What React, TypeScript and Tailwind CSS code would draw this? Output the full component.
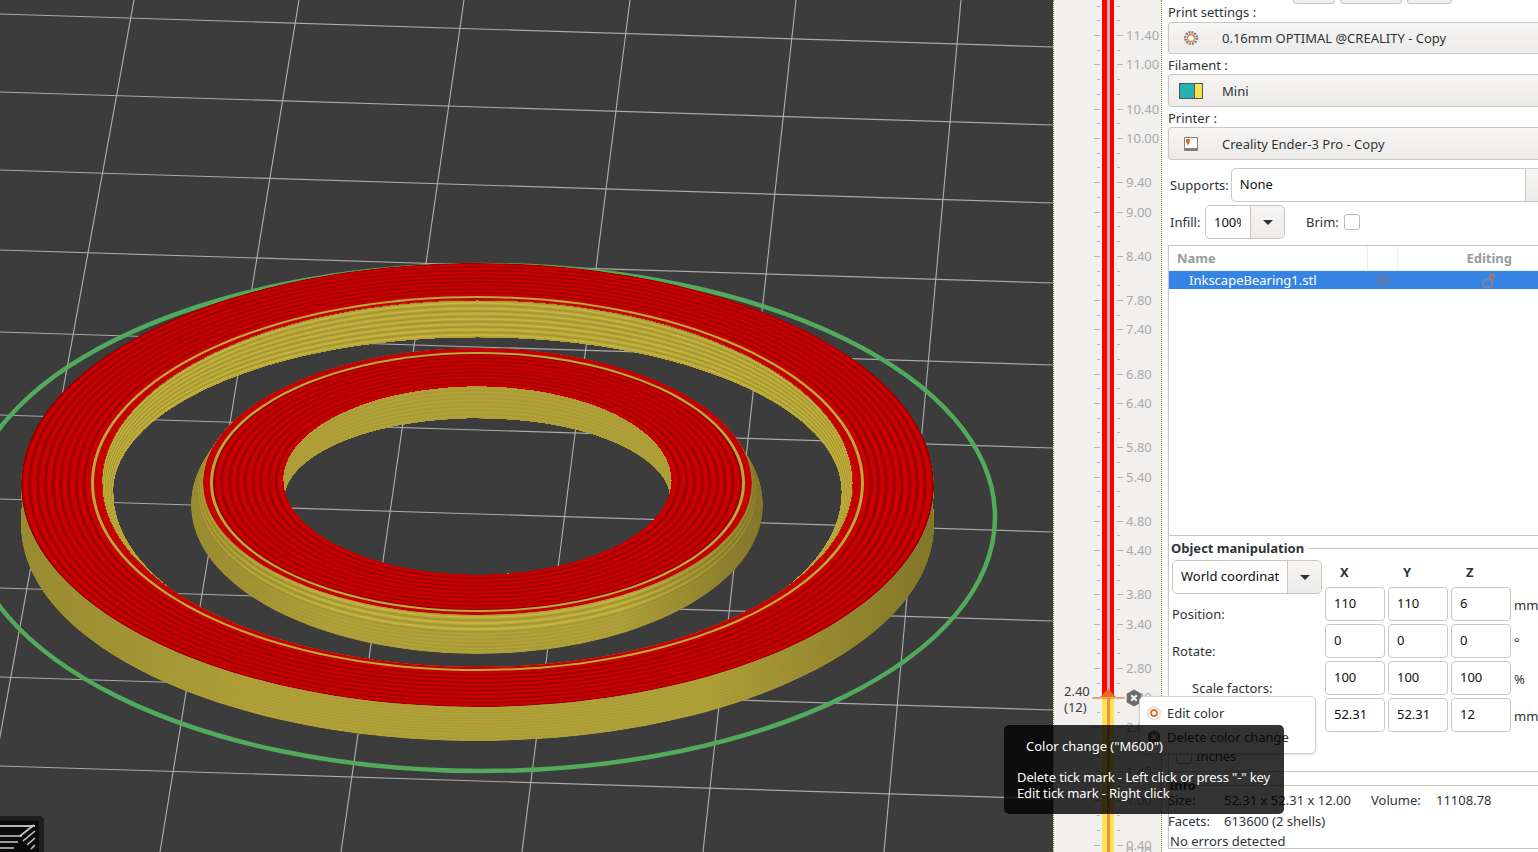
import type { ReactNode } from "react";
import { Eye } from "lucide-react";

// left, right, top, widest y, bottom
type Egg = [number, number, number, number, number];

const eggPath = ([l, r, t, m, b]: Egg) => {
  const k = 0.5523;
  const cx = (l + r) / 2;
  const rx = (r - l) / 2;
  const p = (n: number) => n.toFixed(1);
  return (
    `M${p(l)} ${p(m)}C${p(l)} ${p(m - (m - t) * k)} ${p(cx - rx * k)} ${p(t)} ${p(cx)} ${p(t)}` +
    `C${p(cx + rx * k)} ${p(t)} ${p(r)} ${p(m - (m - t) * k)} ${p(r)} ${p(m)}` +
    `C${p(r)} ${p(m + (b - m) * k)} ${p(cx + rx * k)} ${p(b)} ${p(cx)} ${p(b)}` +
    `C${p(cx - rx * k)} ${p(b)} ${p(l)} ${p(m + (b - m) * k)} ${p(l)} ${p(m)}Z`
  );
};

const lerpEgg = (a: Egg, b: Egg, t: number) => a.map((v, i) => v + (b[i] - v) * t) as Egg;

const REDS = ["#8c0000", "#b40000", "#cc0000", "#cc0000", "#c00000"];

// concentric print lines between two outlines, outer one first
const Stripes = ({ from, to, count, tones }: { from: Egg; to: Egg; count: number; tones: string[] }) => {
  const steps = count * tones.length;
  return (
    <>
      {Array.from({ length: steps }, (_, i) => (
        <path key={i} d={eggPath(lerpEgg(from, to, i / steps))} fill={tones[i % tones.length]} />
      ))}
    </>
  );
};

const outerRim: Egg = [21, 934, 263, 485, 707];
const outerLineA: Egg = [91, 864, 296, 483, 671];
const outerLineB: Egg = [94, 861, 298, 483, 669];
const outerHole: Egg = [102, 853, 300, 483, 667];
const outerWall: Egg = [113, 842, 337, 492, 672];
const outerSide: Egg = [21, 934, 270, 525, 741];

const innerRim: Egg = [203, 752, 348, 483, 615];
const innerLineA: Egg = [210, 745, 352, 483, 612];
const innerLineB: Egg = [213, 742, 354, 483, 610];
const innerHole: Egg = [283, 672, 386, 480, 575];
const innerWall: Egg = [284, 671, 418, 500, 590];
const innerSide: Egg = [191, 763, 355, 505, 654];
const skirt: Egg = [-33, 995, 265, 517, 771];

const YELLOW_SIDE = ["#a99a37", "#b3a33a", "#ad9e38"];
const YELLOW_WALL = ["#a39433", "#b8a83b", "#c9b83e", "#b0a038"];

const VERTICALS = [
  [134, -21],
  [299, 160],
  [464, 341],
  [630, 522],
  [796, 703],
  [961, 884],
];
const HORIZONTALS = [14, 92, 170, 250, 332, 415, 499, 588, 677, 766];

const Scene = () => (
  <svg width="1053" height="852" viewBox="0 0 1053 852" className="block">
    <defs>
      <clipPath id="outerTop">
        <path clipRule="evenodd" d={eggPath(outerRim) + eggPath(outerHole)} />
      </clipPath>
      <clipPath id="outerCrescent">
        <path clipRule="evenodd" d={eggPath(outerRim) + eggPath(outerSide)} />
      </clipPath>
      <clipPath id="outerHoleClip">
        <path d={eggPath(outerHole)} />
      </clipPath>
      <clipPath id="outerWallClip">
        <path clipRule="evenodd" d={eggPath(outerHole) + eggPath(outerWall)} />
      </clipPath>
      <clipPath id="innerTop">
        <path clipRule="evenodd" d={eggPath(innerRim) + eggPath(innerHole)} />
      </clipPath>
      <clipPath id="innerCrescent">
        <path clipRule="evenodd" d={eggPath(innerRim) + eggPath(innerSide)} />
      </clipPath>
      <clipPath id="innerHoleClip">
        <path d={eggPath(innerHole)} />
      </clipPath>
      <clipPath id="innerWallClip">
        <path clipRule="evenodd" d={eggPath(innerHole) + eggPath(innerWall)} />
      </clipPath>
      <linearGradient id="sideShade" x1="0" x2="1" y1="0" y2="0">
        <stop offset="0" stopColor="#000" stopOpacity="0.12" />
        <stop offset="0.25" stopColor="#000" stopOpacity="0" />
        <stop offset="0.75" stopColor="#000" stopOpacity="0" />
        <stop offset="1" stopColor="#000" stopOpacity="0.25" />
      </linearGradient>
    </defs>

    {HORIZONTALS.map((y) => (
      <line key={y} x1="0" y1={y} x2="1053" y2={y + 33} stroke="#a8a8a8" strokeWidth="1.2" />
    ))}
    {VERTICALS.map(([top, bottom]) => (
      <line key={top} x1={top} y1="0" x2={bottom} y2="852" stroke="#b0b0b0" strokeWidth="1.1" />
    ))}

    {/* skirt */}
    <path d={eggPath(skirt)} fill="none" stroke="#52aa5c" strokeWidth="4.5" />

    {/* big ring */}
    <g clipPath="url(#outerCrescent)">
      <Stripes from={outerSide} to={outerRim} count={12} tones={YELLOW_SIDE} />
      <rect x="21" y="263" width="913" height="490" fill="url(#sideShade)" />
    </g>
    <g clipPath="url(#outerHoleClip)">
      <g clipPath="url(#outerWallClip)">
        <Stripes from={outerHole} to={outerWall} count={7} tones={YELLOW_WALL} />
      </g>
    </g>
    <g clipPath="url(#outerTop)">
      <Stripes from={outerRim} to={outerLineA} count={9} tones={REDS} />
      <path d={eggPath(outerLineA)} fill="#b9a93a" />
      <path d={eggPath(outerLineB)} fill="#c40000" />
    </g>

    {/* small ring */}
    <g clipPath="url(#innerCrescent)">
      <Stripes from={innerSide} to={lerpEgg(innerSide, innerRim, 0.55)} count={6} tones={YELLOW_SIDE} />
      <Stripes from={lerpEgg(innerSide, innerRim, 0.55)} to={innerRim} count={3} tones={YELLOW_WALL} />
      <rect x="191" y="348" width="572" height="310" fill="url(#sideShade)" />
    </g>
    <g clipPath="url(#innerHoleClip)">
      <g clipPath="url(#innerWallClip)">
        <Stripes from={innerHole} to={innerWall} count={8} tones={YELLOW_SIDE} />
      </g>
    </g>
    <g clipPath="url(#innerTop)">
      <path d={eggPath(innerRim)} fill="#c40000" />
      <path d={eggPath(innerLineA)} fill="#b9a93a" />
      <Stripes from={innerLineB} to={innerHole} count={9} tones={REDS} />
    </g>
  </svg>
);

// undo/redo thumbnail in the canvas corner
const LayerThumb = () => (
  <svg width="44" height="36" viewBox="0 0 44 36" className="absolute left-0 bottom-0">
    <path d="M0 0H41L44 3V36H0Z" fill="#1f1f1f" />
    <path d="M0 5H39V36H0Z" fill="#0a0a0a" />
    <path d="M0 10H35" stroke="#f2f2f2" strokeWidth="1.5" />
    <path d="M0 20H22M0 26H18M0 32H14" stroke="#9b9b9b" strokeWidth="2" />
    <path d="M20 20L34 9M23 25L35 15M27 29L35 22M31 33L35 29" stroke="#c8c8c8" strokeWidth="1.6" />
  </svg>
);

const TICK_Y = (h: number) => 35 + (11.4 - h) * 73.6;
const LABELS = [
  11.4, 11, 10.4, 10, 9.4, 9, 8.4, 7.8, 7.4, 6.8, 6.4, 5.8, 5.4, 4.8, 4.4, 3.8, 3.4, 2.8, 2.4, 2, 1.4, 1, 0.4, 0.2,
];
const TICKS = Array.from({ length: 60 }, (_, i) => 11.8 - i * 0.2).filter((h) => h > 0);

const LayerSlider = () => (
  <div className="relative w-[109px] shrink-0 bg-[#f1f0ef] border-x border-dotted border-[#8b8b55] overflow-hidden">
    <svg width="107" height="852" viewBox="1054 0 107 852" className="absolute left-0 top-0">
      {TICKS.map((h) => {
        const major = LABELS.some((l) => Math.abs(l - h) < 0.01);
        const y = Math.round(TICK_Y(h)) + 0.5;
        return (
          <g key={h.toFixed(1)} stroke="#b4b2af">
            <line x1={major ? 1094 : 1097} x2="1100" y1={y} y2={y} />
            <line x1="1117" x2={major ? 1123 : 1120} y1={y} y2={y} />
          </g>
        );
      })}
      <rect x="1102" y="0" width="5" height="696" fill="#ff0000" />
      <rect x="1107" y="0" width="3" height="696" fill="#b5b3b1" />
      <rect x="1110" y="0" width="4" height="696" fill="#ff0000" />
      <rect x="1102" y="698" width="5" height="154" fill="#ffe34d" />
      <rect x="1107" y="698" width="3" height="154" fill="#f0934a" />
      <rect x="1110" y="698" width="4" height="154" fill="#ffe34d" />
      <path d="M1100 697L1108 689L1116 697Z" fill="#ed6b21" />
      <line x1="1092" x2="1125" y1="698" y2="698" stroke="#ed6b21" strokeWidth="1.2" />
    </svg>
    {LABELS.map((h) => (
      <span
        key={h}
        className="absolute left-[72px] text-[13px] leading-[16px] text-[#a9a9a9]"
        style={{ top: Math.min(TICK_Y(h) - 8, 843) }}
      >
        {h.toFixed(2)}
      </span>
    ))}
    <div className="absolute left-[10px] top-[683px] text-[13px] leading-[16px] text-[#3c3c3c]">
      2.40
      <br />
      (12)
    </div>
    <svg width="18" height="18" viewBox="0 0 16 16" className="absolute left-[71px] top-[689px]">
      <path d="M8 1L14 4.5V11.5L8 15L2 11.5V4.5Z" fill="#6b6b6b" stroke="#6b6b6b" strokeLinejoin="round" />
      <path d="M5.5 5.5L10.5 10.5M10.5 5.5L5.5 10.5" stroke="#f1f0ef" strokeWidth="1.8" />
    </svg>
  </div>
);

const Arrow = () => <span className="border-x-[5px] border-x-transparent border-t-[5px] border-t-[#2e3436]" />;

const PresetCombo = ({ icon, label, className }: { icon: ReactNode; label: string; className: string }) => (
  <div
    className={`flex items-center border border-r-0 border-[#cdc7c2] rounded-l-[4px] bg-gradient-to-b from-[#f6f5f4] to-[#edebe9] ${className}`}
  >
    <div className="w-[43px] flex justify-center">{icon}</div>
    <span className="ml-[10px]">{label}</span>
  </div>
);

const Field = ({ value }: { value: string }) => (
  <div className="w-[60px] h-[33.5px] border border-[#cdc7c2] rounded-[4px] bg-white pl-2 pb-[1px] flex items-center text-[#101010]">
    {value}
  </div>
);

const SmallCombo = ({
  text,
  className,
  cellClass,
  clipWidth,
}: {
  text: string;
  className: string;
  cellClass: string;
  clipWidth: string;
}) => (
  <div className={`flex h-[34px] border border-[#cdc7c2] rounded-[5px] bg-white ${className}`}>
    <div className={`flex items-center pl-2 text-[#101010] ${cellClass}`}>
      <span className={`block overflow-hidden whitespace-nowrap ${clipWidth}`}>{text}</span>
    </div>
    <div className="flex-1 flex items-center justify-center border-l border-[#cdc7c2] rounded-r-[5px] bg-gradient-to-b from-[#f6f5f4] to-[#edebe9]">
      <Arrow />
    </div>
  </div>
);

const FIELD_ROWS = [
  { values: ["110", "110", "6"], unit: "mm" },
  { values: ["0", "0", "0"], unit: "°" },
  { values: ["100", "100", "100"], unit: "%" },
  { values: ["52.31", "52.31", "12"], unit: "mm" },
];

const SidePanel = () => (
  <div className="w-[376px] shrink-0 bg-white pl-[6px] text-[13px] leading-[16px] text-[#2e3436] overflow-hidden">
    <div className="flex h-[4px] items-end pl-[125px] gap-[5px]">
      <div className="w-[42px] h-[4px] border border-t-0 border-[#cdc7c2] rounded-b-[4px] bg-[#efeeec]" />
      <div className="w-[62px] h-[4px] border border-t-0 border-[#cdc7c2] rounded-b-[4px] bg-[#efeeec]" />
      <div className="w-[45px] h-[4px] border border-t-0 border-[#cdc7c2] rounded-b-[4px] bg-[#efeeec]" />
    </div>

    <div className="h-[18px] pb-[2px] flex items-center">Print settings :</div>
    <PresetCombo
      className="h-[32px]"
      label="0.16mm OPTIMAL @CREALITY - Copy"
      icon={
        <svg width="16" height="16" viewBox="0 0 16 16">
          <circle cx="8" cy="8" r="5.8" fill="none" stroke="#808080" strokeWidth="2.4" strokeDasharray="2 1" />
          <circle cx="8" cy="8" r="3.4" fill="#fff" stroke="#ed6b21" strokeWidth="1.1" />
        </svg>
      }
    />
    <div className="h-[20px] pt-[2px] flex items-center">Filament :</div>
    <PresetCombo
      className="h-[33px]"
      label="Mini"
      icon={
        <div className="flex w-[24px] h-[16px] border border-[#555] bg-[#555]">
          <div className="w-[14px] bg-[#27b2b2]" />
          <div className="w-[7px] ml-[1px] bg-[#f6e34f]" />
        </div>
      }
    />
    <div className="h-[20px] pt-[2px] flex items-center">Printer :</div>
    <PresetCombo
      className="h-[33px]"
      label="Creality Ender-3 Pro - Copy"
      icon={
        <svg width="14" height="14" viewBox="0 0 14 14">
          <path d="M0.5 0.5H13.5V13.5H0.5Z" fill="#fff" stroke="#808080" />
          <path d="M1 11H13V13H1Z" fill="#808080" />
          <path d="M2 2H6V5.5H5V7.5H3V5.5H2Z" fill="#ed6b21" />
        </svg>
      }
    />

    <div className="flex items-center h-[34px] mt-[8px] pl-[2px]">
      <span className="w-[61px]">Supports:</span>
      <div className="flex w-[308px] h-full border border-r-0 border-[#cdc7c2] rounded-l-[5px] bg-white">
        <div className="w-[293px] pl-2 pb-[2px] flex items-center text-[#101010]">None</div>
        <div className="flex-1 border-l border-[#cdc7c2] bg-gradient-to-b from-[#f6f5f4] to-[#edebe9]" />
      </div>
    </div>

    <div className="flex items-center h-[34px] mt-[3px] pl-[2px]">
      <span className="w-[35px]">Infill:</span>
      <SmallCombo text="100%" className="w-[80px]" cellClass="w-[44px] pb-[1px]" clipWidth="w-[27px]" />
      <span className="ml-[21px]">Brim:</span>
      <span className="w-[16px] h-[16px] ml-[5px] border border-[#bdb8b3] rounded-[3px]" />
    </div>

    <div className="h-[291px] mt-[6px] border border-r-0 border-[#cdc7c2]">
      <div className="flex h-[25px] font-bold text-[#9a9a9a] border-b border-[#f1f0ef]">
        <span className="w-[199px] pl-2 flex items-center border-r border-[#ececea]">Name</span>
        <span className="w-[30px] border-r border-[#ececea]" />
        <span className="w-[115px] pr-[1px] flex items-center justify-end">Editing</span>
      </div>
      <div className="flex items-center h-[18px] bg-[#3584e4] text-white">
        <span className="w-[199px] pl-[20px]">InkscapeBearing1.stl</span>
        <span className="w-[30px] flex justify-center">
          <Eye size={15} color="#64789a" strokeWidth={2.5} />
        </span>
        <span className="w-[97px] flex justify-end">
          <svg width="14" height="16" viewBox="0 0 14 16">
            <rect x="2" y="8" width="9" height="7" rx="1.5" fill="none" stroke="#a8846f" strokeWidth="1.1" />
            <circle cx="11" cy="5" r="2.2" fill="#3584e4" stroke="#ed6b21" strokeWidth="1.2" />
          </svg>
        </span>
      </div>
    </div>

    <div className="h-[235px] border-l border-[#cdc7c2] -mt-px">
      <div className="flex items-center h-[24px] -mb-[1px] mt-[1px]">
        <span className="font-bold pl-[2px] pr-[4px] bg-white">Object manipulation</span>
        <span className="flex-1 h-px bg-[#cdc7c2]" />
      </div>
      <div className="flex mt-[1px]">
        <div className="w-[156px] shrink-0 pl-[3px]">
          <SmallCombo text="World coordinates" className="w-[150px]" cellClass="w-[114px] pb-[2px]" clipWidth="w-[98px]" />
          <div className="h-[37px] flex items-center mt-[1px]">Position:</div>
          <div className="h-[37px] flex items-center">Rotate:</div>
          <div className="h-[37px] flex items-center pl-[20px]">Scale factors:</div>
          <div className="flex items-center mt-[42px] pl-[4px]">
            <span className="w-[16px] h-[16px] border border-[#bdb8b3] rounded-[3px]" />
            <span className="ml-[4px]">Inches</span>
          </div>
        </div>
        <div className="flex flex-col shrink-0">
          <div className="flex h-[27px] font-bold">
            <span className="w-[63px] pl-[15px] pt-[4px]">X</span>
            <span className="w-[63px] pl-[15px] pt-[4px]">Y</span>
            <span className="w-[63px] pl-[15px] pt-[4px]">Z</span>
          </div>
          <div className="flex flex-col gap-[3.5px]">
            {FIELD_ROWS.map((row, i) => (
              <div key={i} className="flex items-center gap-[3px]">
                {row.values.map((v, j) => (
                  <Field key={j} value={v} />
                ))}
                <span className="ml-[0px] pt-[3px]">{row.unit}</span>
              </div>
            ))}
          </div>
        </div>
      </div>
    </div>

    <div className="h-[78px] border-l border-b border-t border-[#cdc7c2] relative">
      <div className="absolute left-0 top-[5px] font-bold">Info</div>
      <div className="h-[14px] border-b border-[#cdc7c2]" />
      <div className="flex h-[24px] items-center mt-[2px] -ml-px">
        <span className="w-[56px]">Size:</span>
        <span className="w-[147px]">52.31 x 52.31 x 12.00</span>
        <span className="w-[65px]">Volume:</span>
        <span>11108.78</span>
      </div>
      <div className="flex h-[18px] items-center -ml-px">
        <span className="w-[56px]">Facets:</span>
        <span>613600 (2 shells)</span>
      </div>
      <div className="h-[18px] flex items-center mt-[2px] pl-[1px]">No errors detected</div>
    </div>
  </div>
);

const ContextMenu = () => (
  <div className="absolute left-[1139px] top-[696px] w-[177px] h-[58px] bg-white border border-[#d5d0cc] rounded-[5px] shadow-sm text-[13px] leading-[16px] text-[#2e3436]">
    <div className="flex items-center h-[24px] mt-[4px] pl-[7px]">
      <svg width="14" height="16" viewBox="0 0 14 16">
        <path d="M7 1.5L13 5V11.5L7 15L1 11.5V5Z" fill="#fff" stroke="#c9c9c9" />
        <circle cx="7" cy="8" r="3" fill="#fff" stroke="#ed6b21" strokeWidth="1.8" />
      </svg>
      <span className="ml-[6px]">Edit color</span>
    </div>
    <div className="flex items-center h-[24px] pl-[7px]">
      <svg width="14" height="16" viewBox="0 0 14 16">
        <path d="M7 1L13 4.5V11.5L7 15L1 11.5V4.5Z" fill="#6b6b6b" />
        <path d="M4.8 5.8L9.2 10.2M9.2 5.8L4.8 10.2" stroke="#fff" strokeWidth="1.6" />
      </svg>
      <span className="ml-[6px]">Delete color change</span>
    </div>
  </div>
);

const Tooltip = () => (
  <div className="absolute left-[1004px] top-[725px] w-[280px] h-[89px] rounded-[5px] bg-black/80 text-white text-[13px] leading-[16px] pl-[13px] pt-[13px]">
    <div className="pl-[9px]">Color change ("M600")</div>
    <div className="mt-[15px] tracking-[-0.11px]">Delete tick mark - Left click or press "-" key</div>
    <div className="tracking-[-0.11px]">Edit tick mark - Right click</div>
  </div>
);

export default function App() {
  return (
    <div className="relative flex w-[1538px] h-[852px] overflow-hidden font-['Noto_Sans',sans-serif]">
      <div className="relative w-[1053px] shrink-0 bg-[#3c3c3c]">
        <Scene />
        <LayerThumb />
      </div>
      <LayerSlider />
      <SidePanel />
      <ContextMenu />
      <Tooltip />
    </div>
  );
}
